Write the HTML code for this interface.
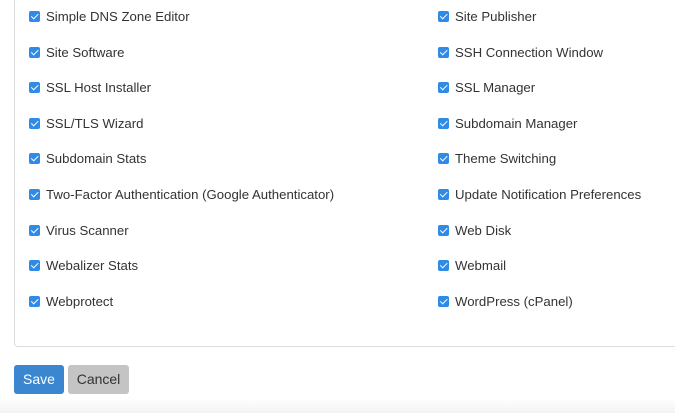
<html><head><style>
body{margin:0;width:675px;height:413px;background:#fff;font-family:"Liberation Sans",sans-serif;position:relative;overflow:hidden}
.panel{position:absolute;left:14px;top:-5px;width:680px;height:352px;border:1px solid #ddd;border-radius:4px;box-sizing:border-box}
.r{position:absolute;font-size:13.2px;color:#333;line-height:16px}
.r i{position:absolute;left:-17px;top:2px;width:11px;height:11px;background:#2f8be6;border-radius:2px}
.r i:after{content:"";position:absolute;left:3.5px;top:1px;width:2.5px;height:5.5px;border:solid #fff;border-width:0 1.5px 1.5px 0;transform:rotate(45deg)}
.btn{position:absolute;top:365px;height:29px;border-radius:3px;font-size:14px;line-height:29px;text-align:center}
.foot{position:absolute;left:0;top:398px;width:675px;height:15px;background:linear-gradient(#fff,#f3f3f3)}
</style></head><body>
<div class="panel"></div>
<div class="r" style="left:46px;top:9px"><i></i>Simple DNS Zone Editor</div>
<div class="r" style="left:46px;top:45px"><i></i>Site Software</div>
<div class="r" style="left:46px;top:80px"><i></i>SSL Host Installer</div>
<div class="r" style="left:46px;top:116px"><i></i>SSL/TLS Wizard</div>
<div class="r" style="left:46px;top:151px"><i></i>Subdomain Stats</div>
<div class="r" style="left:46px;top:187px"><i></i>Two-Factor Authentication (Google Authenticator)</div>
<div class="r" style="left:46px;top:223px"><i></i>Virus Scanner</div>
<div class="r" style="left:46px;top:258px"><i></i>Webalizer Stats</div>
<div class="r" style="left:46px;top:294px"><i></i>Webprotect</div>
<div class="r" style="left:455px;top:9px"><i></i>Site Publisher</div>
<div class="r" style="left:455px;top:45px"><i></i>SSH Connection Window</div>
<div class="r" style="left:455px;top:80px"><i></i>SSL Manager</div>
<div class="r" style="left:455px;top:116px"><i></i>Subdomain Manager</div>
<div class="r" style="left:455px;top:151px"><i></i>Theme Switching</div>
<div class="r" style="left:455px;top:187px"><i></i>Update Notification Preferences</div>
<div class="r" style="left:455px;top:223px"><i></i>Web Disk</div>
<div class="r" style="left:455px;top:258px"><i></i>Webmail</div>
<div class="r" style="left:455px;top:294px"><i></i>WordPress (cPanel)</div>
<div class="foot"></div>
<div class="btn" style="left:14px;width:50px;background:#3a87d0;color:#fff">Save</div>
<div class="btn" style="left:68px;width:61px;background:#c4c4c4;color:#333">Cancel</div>
</body></html>
